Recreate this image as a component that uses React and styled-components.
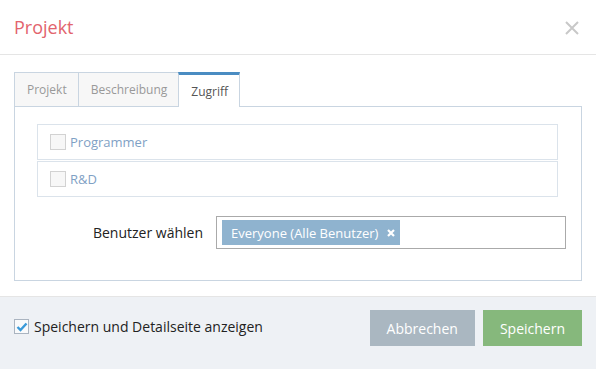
import React from "react";
import styled, { createGlobalStyle } from "styled-components";

const COLORS = {
  title: "#e2646d",
  border: "#e5e5e5",
  tabBorder: "#c9d5e1",
  tabActive: "#4a8cc2",
  rowBorder: "#dbe3eb",
  groupText: "#7fa1c5",
  tag: "#8fb3cf",
  footer: "#eef1f5",
  cancel: "#aab7c1",
  save: "#86b87c",
};

const GlobalStyle = createGlobalStyle`
  html, body {
    margin: 0;
    padding: 0;
    background: #fff;
  }
  body {
    font-family: "Open Sans", "Liberation Sans", sans-serif;
    color: #222;
  }
`;

const Dialog = styled.div`
  width: 596px;
  height: 369px;
  display: flex;
  flex-direction: column;
  background: #fff;
`;

const Header = styled.div`
  height: 54px;
  border-bottom: 1px solid ${COLORS.border};
  display: flex;
  align-items: center;
  justify-content: space-between;
  padding: 0 16px 0 14px;
`;

const Title = styled.h4`
  margin: 0;
  font-size: 18px;
  font-weight: 400;
  color: ${COLORS.title};
  line-height: 1;
`;

const Close = styled.button`
  border: none;
  background: none;
  padding: 0;
  width: 16px;
  height: 16px;
  display: flex;
  cursor: pointer;
  position: relative;
  top: 1px;
`;

const Body = styled.div`
  padding: 17px 14px 15px;
`;

const Tabs = styled.div`
  display: flex;
  align-items: flex-end;
  height: 34px;
`;

const Tab = styled.div`
  box-sizing: border-box;
  height: ${(p) => (p.$active ? "35px" : "34px")};
  padding: 0 11px 0 12px;
  display: flex;
  align-items: center;
  font-size: 12px;
  color: ${(p) => (p.$active ? "#555" : "#999")};
  background: ${(p) => (p.$active ? "#fff" : "#f7f7f7")};
  border: 1px solid ${COLORS.tabBorder};
  border-top: ${(p) =>
    p.$active ? `3px solid ${COLORS.tabActive}` : `1px solid ${COLORS.tabBorder}`};
  border-bottom: none;
  margin-left: -1px;
  margin-bottom: ${(p) => (p.$active ? "-1px" : "0")};
  position: relative;
  z-index: ${(p) => (p.$active ? 1 : 0)};

  &:first-child {
    margin-left: 0;
  }
`;

const Panel = styled.div`
  border: 1px solid ${COLORS.tabBorder};
  padding: 17px 23px 32px 22px;
  height: 175px;
  box-sizing: border-box;
`;

const Groups = styled.div`
  display: flex;
  flex-direction: column;
  gap: 1px;
`;

const GroupRow = styled.label`
  height: 36px;
  box-sizing: border-box;
  border: 1px solid ${COLORS.rowBorder};
  display: flex;
  align-items: center;
  gap: 4px;
  padding-left: 12px;
  font-size: 13px;
  color: ${COLORS.groupText};
`;

const Box = styled.span`
  width: 16px;
  height: 16px;
  box-sizing: border-box;
  border: 1px solid #d2d2d2;
  background: #f7f7f7;
  display: inline-flex;
  align-items: center;
  justify-content: center;
`;

const Field = styled.div`
  display: flex;
  align-items: center;
  margin-top: 19px;
  margin-right: -8px;
`;

const FieldLabel = styled.div`
  width: 179px;
  padding-right: 13px;
  box-sizing: border-box;
  text-align: right;
  font-size: 14px;
  color: #222;
`;

const Select = styled.div`
  flex: 1;
  height: 33px;
  box-sizing: border-box;
  border: 1px solid #aaa;
  padding: 3px 5px;
  display: flex;
  align-items: center;
`;

const Tag = styled.span`
  height: 25px;
  display: inline-flex;
  align-items: center;
  gap: 9px;
  padding: 0 5px 0 9px;
  background: ${COLORS.tag};
  color: #fff;
  font-size: 13px;
`;

const Footer = styled.div`
  flex: 1;
  background: ${COLORS.footer};
  border-top: 1px solid ${COLORS.border};
  display: flex;
  align-items: flex-start;
  justify-content: space-between;
  padding: 13px 14px 0;
`;

const ShowDetails = styled.label`
  display: flex;
  align-items: center;
  gap: 5px;
  font-size: 14px;
  color: #222;
  margin-top: 7px;
`;

const CheckBox = styled.span`
  width: 15px;
  height: 15px;
  box-sizing: border-box;
  border: 1px solid #aab4c0;
  background: #f9fafb;
  display: inline-flex;
  align-items: center;
  justify-content: center;
`;

const Buttons = styled.div`
  display: flex;
  gap: 8px;
`;

const Button = styled.button`
  height: 36px;
  border: none;
  padding: 0 17px;
  font-family: inherit;
  font-size: 14px;
  color: #fff;
  background: ${(p) => p.$bg};
  cursor: pointer;
`;

const CloseIcon = () => (
  <svg width="16" height="16" viewBox="0 0 16 16">
    <path d="M2 2L14 14M14 2L2 14" stroke="#c8c8c8" strokeWidth="2" />
  </svg>
);

const TagRemove = () => (
  <svg width="8" height="8" viewBox="0 0 8 8">
    <path d="M1 1L7 7M7 1L1 7" stroke="#fff" strokeWidth="2.2" />
  </svg>
);

const Check = () => (
  <svg width="12" height="10" viewBox="0 0 12 10">
    <path
      d="M1.5 5L4.5 8L10.5 1.5"
      fill="none"
      stroke="#3a9ad9"
      strokeWidth="2.4"
    />
  </svg>
);

const GROUPS = ["Programmer", "R&D"];

export default function App() {
  return (
    <>
      <GlobalStyle />
      <Dialog>
        <Header>
          <Title>Projekt</Title>
          <Close aria-label="Schließen">
            <CloseIcon />
          </Close>
        </Header>
        <Body>
          <Tabs>
            <Tab>Projekt</Tab>
            <Tab>Beschreibung</Tab>
            <Tab $active>Zugriff</Tab>
          </Tabs>
          <Panel>
            <Groups>
              {GROUPS.map((g) => (
                <GroupRow key={g}>
                  <Box />
                  {g}
                </GroupRow>
              ))}
            </Groups>
            <Field>
              <FieldLabel>Benutzer wählen</FieldLabel>
              <Select>
                <Tag>
                  Everyone (Alle Benutzer)
                  <TagRemove />
                </Tag>
              </Select>
            </Field>
          </Panel>
        </Body>
        <Footer>
          <ShowDetails>
            <CheckBox>
              <Check />
            </CheckBox>
            Speichern und Detailseite anzeigen
          </ShowDetails>
          <Buttons>
            <Button $bg={COLORS.cancel}>Abbrechen</Button>
            <Button $bg={COLORS.save}>Speichern</Button>
          </Buttons>
        </Footer>
      </Dialog>
    </>
  );
}
